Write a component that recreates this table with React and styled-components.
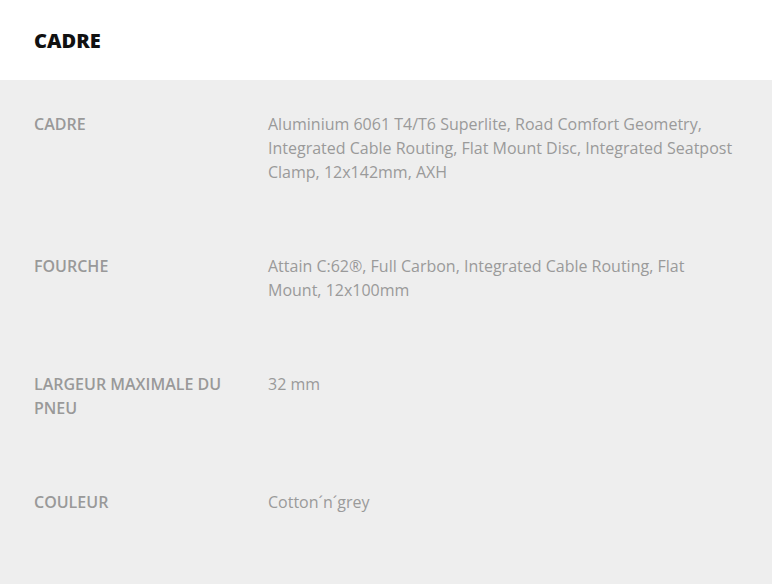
import React from "react";
import styled, { createGlobalStyle } from "styled-components";

const GlobalStyle = createGlobalStyle`
  html, body {
    margin: 0;
    padding: 0;
    background: #eeeeee;
  }
  body {
    font-family: "Open Sans", "Liberation Sans", sans-serif;
  }
`;

const Page = styled.div`
  width: 100%;
  min-height: 584px;
  background-color: #eeeeee;
`;

const Header = styled.div`
  height: 80px;
  background-color: #fff;
  display: flex;
  align-items: center;
  padding: 0 34px;
  box-sizing: border-box;
`;

const Title = styled.h2`
  margin: 0;
  font-size: 20px;
  font-weight: 800;
  color: #111;
  letter-spacing: 0;
`;

const SpecList = styled.div`
  display: flex;
  flex-direction: column;
  gap: 70px;
  padding: 32px 34px 40px 34px;
`;

const SpecRow = styled.div`
  display: grid;
  grid-template-columns: 234px 1fr;
  font-size: 16px;
  line-height: 24px;
`;

const Label = styled.div`
  font-weight: 600;
  color: #999999;
  padding-right: 20px;
  text-transform: uppercase;
`;

const Value = styled.div`
  font-weight: 400;
  color: #9a9a9a;
`;

function App() {
  const specs = [
    {
      label: "Cadre",
      value:
        "Aluminium 6061 T4/T6 Superlite, Road Comfort Geometry, Integrated Cable Routing, Flat Mount Disc, Integrated Seatpost Clamp, 12x142mm, AXH",
    },
    {
      label: "Fourche",
      value:
        "Attain C:62®, Full Carbon, Integrated Cable Routing, Flat Mount, 12x100mm",
    },
    { label: "Largeur maximale du pneu", value: "32 mm" },
    { label: "Couleur", value: "Cotton´n´grey" },
  ];

  return (
    <Page>
      <GlobalStyle />
      <Header>
        <Title>CADRE</Title>
      </Header>
      <SpecList>
        {specs.map((spec, index) => (
          <SpecRow key={index}>
            <Label>{spec.label}</Label>
            <Value>{spec.value}</Value>
          </SpecRow>
        ))}
      </SpecList>
    </Page>
  );
}

export default App;
